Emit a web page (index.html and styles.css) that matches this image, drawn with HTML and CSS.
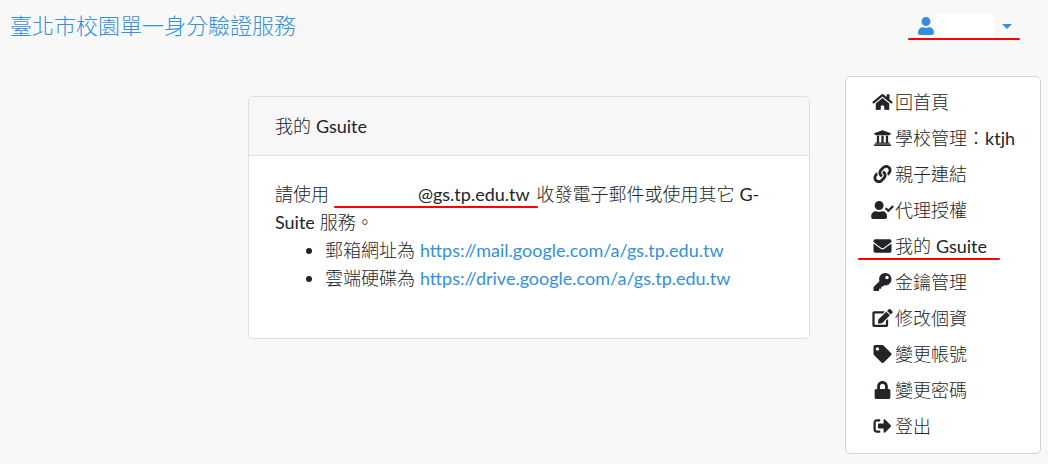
FILE: index.html
```html
<!DOCTYPE html>
<html lang="zh-Hant">
<head>
<meta charset="utf-8">
<meta name="viewport" content="width=device-width, initial-scale=1">
<title>我的 Gsuite</title>
<link rel="stylesheet" href="styles.css">
</head>
<body>
<header class="navbar">
  <a class="brand" href="#">臺北市校園單一身分驗證服務</a>
  <div class="account">
    <button class="account-toggle marked" type="button" aria-label="使用者選單" aria-expanded="true">
      <svg class="user-icon" viewBox="0 0 448 512"><path d="M224 256c70.7 0 128-57.3 128-128S294.7 0 224 0 96 57.3 96 128s57.3 128 128 128zm89.6 32h-16.7c-22.2 10.2-46.9 16-72.9 16s-50.6-5.8-72.9-16h-16.7C60.2 288 0 348.2 0 422.4V464c0 26.5 21.5 48 48 48h352c26.5 0 48-21.5 48-48v-41.6c0-74.2-60.2-134.4-134.4-134.4z"/></svg>
      <span class="hidden-name"></span>
      <span class="caret"></span>
    </button>
    <nav class="menu">
      <a class="menu-item" href="#"><svg class="icon" viewBox="0 0 576 512"><path d="M280.37 148.26L96 300.11V464a16 16 0 0 0 16 16l112.06-.29a16 16 0 0 0 15.92-16V368a16 16 0 0 1 16-16h64a16 16 0 0 1 16 16v95.64a16 16 0 0 0 16 16.05L464 480a16 16 0 0 0 16-16V300L295.67 148.26a12.19 12.19 0 0 0-15.3 0zM571.6 251.47L488 182.56V44.05a12 12 0 0 0-12-12h-56a12 12 0 0 0-12 12v72.61L318.47 43a48 48 0 0 0-61 0L4.34 251.47a12 12 0 0 0-1.6 16.9l25.5 31A12 12 0 0 0 45.15 301l235.22-193.74a12.19 12.19 0 0 1 15.3 0L530.9 301a12 12 0 0 0 16.9-1.6l25.5-31a12 12 0 0 0-1.7-16.93z"/></svg>回首頁</a>
      <a class="menu-item" href="#"><svg class="icon" viewBox="0 0 512 512"><path d="M496 128v16a8 8 0 0 1-8 8h-24v12c0 6.627-5.373 12-12 12H60c-6.627 0-12-5.373-12-12v-12H24a8 8 0 0 1-8-8v-16a8 8 0 0 1 4.941-7.392l232-88a7.996 7.996 0 0 1 6.118 0l232 88A8 8 0 0 1 496 128zm-24 304H40c-13.255 0-24 10.745-24 24v16a8 8 0 0 0 8 8h464a8 8 0 0 0 8-8v-16c0-13.255-10.745-24-24-24zM96 192v192H60c-6.627 0-12 5.373-12 12v20h416v-20c0-6.627-5.373-12-12-12h-36V192h-64v192h-64V192h-64v192h-64V192H96z"/></svg>學校管理：<span class="latin">ktjh</span></a>
      <a class="menu-item" href="#"><svg class="icon" viewBox="0 0 512 512"><path d="M326.612 185.391c59.747 59.809 58.927 155.698.36 214.59-.11.12-.24.25-.36.37l-67.2 67.2c-59.27 59.27-155.699 59.262-214.96 0-59.27-59.26-59.27-155.7 0-214.96l37.106-37.106c9.84-9.84 26.786-3.3 27.294 10.606.648 17.722 3.826 35.527 9.69 52.721 1.986 5.822.567 12.262-3.783 16.612l-13.087 13.087c-28.026 28.026-28.905 73.66-1.155 101.96 28.024 28.579 74.086 28.749 102.325.51l67.2-67.19c28.191-28.191 28.073-73.757 0-101.83-3.701-3.694-7.429-6.564-10.341-8.569a16.037 16.037 0 0 1-6.947-12.606c-.396-10.567 3.348-21.456 11.698-29.806l21.054-21.055c5.521-5.521 14.182-6.199 20.584-1.731a152.482 152.482 0 0 1 20.522 17.197zM467.547 44.449c-59.261-59.262-155.69-59.27-214.96 0l-67.2 67.2c-.12.12-.25.25-.36.37-58.566 58.892-59.387 154.781.36 214.59a152.454 152.454 0 0 0 20.521 17.196c6.402 4.468 15.064 3.789 20.584-1.731l21.054-21.055c8.35-8.35 12.094-19.239 11.698-29.806a16.037 16.037 0 0 0-6.947-12.606c-2.912-2.005-6.64-4.875-10.341-8.569-28.073-28.073-28.191-73.639 0-101.83l67.2-67.19c28.239-28.239 74.3-28.069 102.325.51 27.75 28.3 26.872 73.934-1.155 101.96l-13.087 13.087c-4.35 4.35-5.769 10.79-3.783 16.612 5.864 17.194 9.042 34.999 9.69 52.721.509 13.906 17.454 20.446 27.294 10.606l37.106-37.106c59.271-59.259 59.271-155.699.001-214.959z"/></svg>親子連結</a>
      <a class="menu-item" href="#"><svg class="icon" viewBox="0 0 640 512"><path d="M224 256c70.7 0 128-57.3 128-128S294.7 0 224 0 96 57.3 96 128s57.3 128 128 128zm89.6 32h-16.7c-22.2 10.2-46.9 16-72.9 16s-50.6-5.8-72.9-16h-16.7C60.2 288 0 348.2 0 422.4V464c0 26.5 21.5 48 48 48h352c26.5 0 48-21.5 48-48v-41.6c0-74.2-60.2-134.4-134.4-134.4z"/><path d="M636.6 158.5l-27.9-28.2c-4.6-4.7-12.1-4.7-16.8-.1L486.8 234.4l-45.6-45.9c-4.6-4.7-12.1-4.7-16.8-.1l-28.1 27.9c-4.7 4.6-4.7 12.1-.1 16.8l81.7 82.3c4.6 4.7 12.1 4.7 16.8.1l141.8-140.2c4.6-4.7 4.7-12.2.1-16.8z"/></svg>代理授權</a>
      <a class="menu-item marked" href="#"><svg class="icon" viewBox="0 0 512 512"><path d="M502.3 190.8c3.9-3.1 9.7-.2 9.7 4.7V400c0 26.5-21.5 48-48 48H48c-26.5 0-48-21.5-48-48V195.6c0-5 5.7-7.8 9.7-4.7 22.4 17.4 52.1 39.5 154.1 113.6 21.1 15.4 56.7 47.8 92.2 47.6 35.7.3 72-32.8 92.3-47.6 102-74.1 131.6-96.3 154-113.7zM256 320c23.2.4 56.6-29.2 73.4-41.4 132.7-96.3 142.8-104.7 173.4-128.7 5.8-4.5 9.2-11.5 9.2-18.9v-19c0-26.5-21.5-48-48-48H48c-26.5 0-48 21.5-48 48v19c0 7.4 3.4 14.3 9.2 18.9 30.6 23.9 40.7 32.4 173.4 128.7 16.8 12.2 50.2 41.8 73.4 41.4z"/></svg>我的 <span class="latin">Gsuite</span></a>
      <a class="menu-item" href="#"><svg class="icon" viewBox="0 0 512 512"><path d="M512 176.001C512 273.203 433.202 352 336 352c-11.22 0-22.19-1.062-32.827-3.069l-24.012 27.014A23.999 23.999 0 0 1 261.223 384H224v40c0 13.255-10.745 24-24 24h-40v40c0 13.255-10.745 24-24 24H24c-13.255 0-24-10.745-24-24v-78.059c0-6.365 2.529-12.47 7.029-16.971l161.802-161.802C163.108 213.814 160 195.271 160 176 160 78.798 238.797.001 335.999 0 433.488-.001 512 78.511 512 176.001zM336 128c0 26.51 21.49 48 48 48s48-21.49 48-48-21.49-48-48-48-48 21.49-48 48z"/></svg>金鑰管理</a>
      <a class="menu-item" href="#"><svg class="icon" viewBox="0 0 576 512"><path d="M402.6 83.2l90.2 90.2c3.8 3.8 3.8 10 0 13.8L274.4 405.6l-92.8 10.3c-12.4 1.4-22.9-9.1-21.5-21.5l10.3-92.8L388.8 83.2c3.8-3.8 10-3.8 13.8 0zm162-22.9l-48.8-48.8c-15.2-15.2-39.9-15.2-55.2 0l-35.4 35.4c-3.8 3.8-3.8 10 0 13.8l90.2 90.2c3.8 3.8 10 3.8 13.8 0l35.4-35.4c15.2-15.3 15.2-40 0-55.2zM384 346.2V448H64V128h229.8c3.2 0 6.2-1.3 8.5-3.5l40-40c7.6-7.6 2.2-20.5-8.5-20.5H48C21.5 64 0 85.5 0 112v352c0 26.5 21.5 48 48 48h352c26.5 0 48-21.5 48-48V306.2c0-10.7-12.9-16-20.5-8.5l-40 40c-2.2 2.3-3.5 5.3-3.5 8.5z"/></svg>修改個資</a>
      <a class="menu-item" href="#"><svg class="icon" viewBox="0 0 512 512"><path d="M0 252.118V48C0 21.49 21.49 0 48 0h204.118a48 48 0 0 1 33.941 14.059l211.882 211.882c18.745 18.745 18.745 49.137 0 67.882L293.823 497.941c-18.745 18.745-49.137 18.745-67.882 0L14.059 286.059A48 48 0 0 1 0 252.118zM112 64c-26.51 0-48 21.49-48 48s21.49 48 48 48 48-21.49 48-48-21.49-48-48-48z"/></svg>變更帳號</a>
      <a class="menu-item" href="#"><svg class="icon" viewBox="0 0 448 512"><path d="M400 224h-24v-72C376 68.2 307.8 0 224 0S72 68.2 72 152v72H48c-26.5 0-48 21.5-48 48v192c0 26.5 21.5 48 48 48h352c26.5 0 48-21.5 48-48V272c0-26.5-21.5-48-48-48zm-104 0H152v-72c0-39.7 32.3-72 72-72s72 32.3 72 72v72z"/></svg>變更密碼</a>
      <a class="menu-item" href="#"><svg class="icon" viewBox="0 0 512 512"><path d="M497 273L329 441c-15 15-41 4.5-41-17v-96H152c-13.3 0-24-10.7-24-24v-96c0-13.3 10.7-24 24-24h136V88c0-21.4 25.9-32 41-17l168 168c9.3 9.4 9.3 24.6 0 34zM192 436v-40c0-6.6-5.4-12-12-12H96c-17.7 0-32-14.3-32-32V160c0-17.7 14.3-32 32-32h84c6.6 0 12-5.4 12-12V76c0-6.6-5.4-12-12-12H96c-53 0-96 43-96 96v192c0 53 43 96 96 96h84c6.6 0 12-5.4 12-12z"/></svg>登出</a>
    </nav>
  </div>
</header>
<main class="page">
  <section class="card">
    <h1 class="card-header">我的 <span class="latin">Gsuite</span></h1>
    <div class="card-body">
      <p class="intro">請使用 <span class="email latin marked">@gs.tp.edu.tw</span> 收發電子郵件或使用其它 <span class="latin">G-Suite</span> 服務。</p>
      <ul class="links">
        <li>郵箱網址為 <a class="link latin" href="#">https://mail.google.com/a/gs.tp.edu.tw</a></li>
        <li>雲端硬碟為 <a class="link latin" href="#">https://drive.google.com/a/gs.tp.edu.tw</a></li>
      </ul>
    </div>
  </section>
</main>
</body>
</html>
```
FILE: styles.css
```css
* { box-sizing: border-box; }

body {
  margin: 0;
  background: #f8f8f8;
  color: #212529;
  font-family: Lato, "Noto Sans CJK TC Light", "Noto Sans CJK TC", sans-serif;
  font-size: 18px;
  font-weight: 300;
  line-height: 28px;
}

a { color: inherit; text-decoration: none; }

.latin { font-family: Lato, sans-serif; font-weight: 400; }

.navbar {
  display: flex;
  align-items: center;
  justify-content: space-between;
  padding: 12px 28px 12px 10px;
}

.brand { color: #3490dc; font-size: 22px; }

.account-toggle {
  display: flex;
  align-items: center;
  gap: 2px;
  height: 28px;
  padding: 0 8px 0 10px;
  border: 0;
  background: none;
}

.user-icon { width: 16px; height: 18px; fill: #3490dc; }

.hidden-name { width: 58px; height: 24px; margin-right: 6px; background: #fff; }

.caret {
  border-top: 5px solid #3490dc;
  border-right: 5px solid transparent;
  border-left: 5px solid transparent;
}

.marked { position: relative; }

.marked::after {
  content: "";
  position: absolute;
  right: 0;
  bottom: 0;
  left: 0;
  height: 2px;
  border-radius: 1px;
  background: #f00;
}

.menu {
  position: absolute;
  top: 76px;
  right: 7px;
  display: flex;
  flex-direction: column;
  gap: 8px;
  padding: 11px 25px 13px;
  border: 1px solid #d3d3d3;
  border-radius: 5px;
  background: #fff;
}

.menu-item { display: flex; align-items: center; white-space: pre; }

.menu-item.marked::after { right: 15px; left: -13px; }

.icon { width: 23px; height: 18px; margin-right: 1px; fill: #212529; }

.page {
  display: grid;
  grid-template-columns: 248fr 562fr 238fr;
  padding: 44px 0 24px;
}

.card {
  grid-column: 2;
  border: 1px solid #dfdfdf;
  border-radius: 5px;
  background: #fff;
}

.card-header {
  margin: 0;
  padding: 15px 26px;
  border-bottom: 1px solid #dfdfdf;
  border-radius: 4px 4px 0 0;
  background: #f7f7f7;
  font-size: 18px;
  font-weight: 300;
}

.card-body { padding: 24px 26px 46px; }

.intro { margin: 0; }

.email { padding: 0 2px 0 84px; }

.email.marked::after { right: -6px; bottom: -3px; }

.links { margin: 0; padding-left: 50px; }

.link { color: #3490dc; }
```
